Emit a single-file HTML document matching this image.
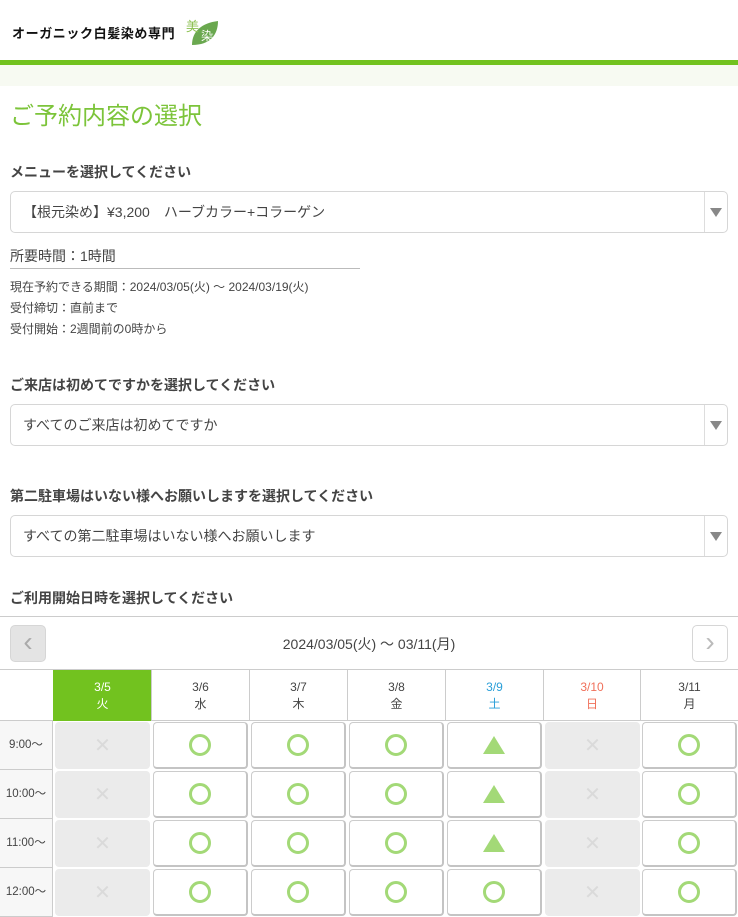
<!DOCTYPE html>
<html lang="ja"><head><meta charset="utf-8">
<style>
*{margin:0;padding:0;box-sizing:border-box}
body{width:738px;height:900px;overflow:hidden;background:#fff;font-family:"Liberation Sans","Noto Sans CJK JP",sans-serif;color:#444;position:relative}
.a{position:absolute}
.lbl{position:absolute;left:10px;font-size:14px;font-weight:bold;color:#444}
.sel{position:absolute;left:10px;width:718px;height:42px;border:1px solid #d6d6d6;border-radius:5px;font-size:14px;line-height:40px;padding-left:12px;color:#444}
.sel:after{content:"";position:absolute;right:0;top:0;width:22px;height:40px;border-left:1px solid #ddd}
.sel:before{content:"";position:absolute;right:5px;top:16px;border-left:6px solid transparent;border-right:6px solid transparent;border-top:9px solid #888}
.hd{position:absolute;top:670px;height:51px;border-left:1px solid #ccc;text-align:center;font-size:12px;line-height:17px;padding-top:9px;color:#444}
.c{position:absolute;width:95px;height:47px;border-radius:4px}
.on{background:#fff;border:1px solid #ccc;border-bottom:2px solid #c4c4c4;border-right:2px solid #c4c4c4}
.off{background:#ebebeb}
.tm{position:absolute;left:0;width:53px;height:49px;background:#f7f7f7;border-bottom:1px solid #ccc;border-right:1px solid #ccc;font-size:11.5px;line-height:48px;text-align:center;color:#444}
.o{position:absolute;left:50%;top:50%;width:22px;height:22px;margin:-11px 0 0 -11px;border:3px solid #a3d977;border-radius:50%}
.x{position:absolute;width:100%;top:12px;text-align:center;font-size:20px;color:#dadada;line-height:24px}
.t{position:absolute;left:50%;top:50%;margin:-9px 0 0 -11px;border-left:11px solid transparent;border-right:11px solid transparent;border-bottom:18px solid #a3d977}
</style></head><body>
<div class="a" style="left:12px;top:23px;font-size:13px;font-weight:bold;color:#111;letter-spacing:0.6px">オーガニック白髪染め専門</div>
<svg class="a" style="left:186px;top:17px" width="34" height="30" viewBox="0 0 34 30"><path d="M6 28 C6 14 16 6 32 4 C32 18 24 28 6 28Z" fill="#6aa84f"/><text x="0" y="14" font-size="13" fill="#8cc152" font-family="Noto Sans CJK JP">美</text><text x="15" y="23" font-size="12" fill="#fff" font-family="Noto Sans CJK JP">染</text></svg>
<div class="a" style="left:0;top:60px;width:738px;height:5px;background:#72c21f"></div>
<div class="a" style="left:0;top:65px;width:738px;height:21px;background:#f7faf2"></div>
<div class="a" style="left:10px;top:96px;font-size:24px;color:#7cc43a">ご予約内容の選択</div>
<div class="lbl" style="top:162px">メニューを選択してください</div>
<div class="sel" style="top:191px">【根元染め】¥3,200　ハーブカラー+コラーゲン</div>
<div class="a" style="left:10px;top:246px;font-size:14px">所要時間：1時間</div>
<div class="a" style="left:10px;top:268px;width:350px;height:1px;background:#bbb"></div>
<div class="a" style="left:10px;top:277px;font-size:12px;line-height:21px">現在予約できる期間：2024/03/05(火) ～ 2024/03/19(火)<br>受付締切：直前まで<br>受付開始：2週間前の0時から</div>
<div class="lbl" style="top:375px">ご来店は初めてですかを選択してください</div>
<div class="sel" style="top:404px">すべてのご来店は初めてですか</div>
<div class="lbl" style="top:486px">第二駐車場はいない様へお願いしますを選択してください</div>
<div class="sel" style="top:515px">すべての第二駐車場はいない様へお願いします</div>
<div class="lbl" style="top:588px">ご利用開始日時を選択してください</div>
<div class="a" style="left:0;top:616px;width:738px;height:1px;background:#ccc"></div>
<div class="a" style="left:10px;top:625px;width:36px;height:37px;background:#e4e4e4;border:1px solid #d6d6d6;border-radius:5px;color:#aaa;font-size:28px;line-height:32px;text-align:center">‹</div>
<div class="a" style="left:692px;top:625px;width:36px;height:37px;background:#fff;border:1px solid #d6d6d6;border-radius:5px;color:#bbb;font-size:28px;line-height:32px;text-align:center">›</div>
<div class="a" style="left:0;width:738px;top:634px;text-align:center;font-size:14px;color:#444">2024/03/05(火) ～ 03/11(月)</div>
<div class="a" style="left:0;top:669px;width:738px;height:1px;background:#ccc"></div>
<div class="a" style="left:0;top:720px;width:738px;height:1px;background:#ccc"></div>
<div class="hd" style="left:53px;width:98px;background:#72c21f;color:#fff;border-left:1px solid #72c21f">3/5<br>火</div>
<div class="hd" style="left:151px;width:98px">3/6<br>水</div>
<div class="hd" style="left:249px;width:98px">3/7<br>木</div>
<div class="hd" style="left:347px;width:98px">3/8<br>金</div>
<div class="hd" style="left:445px;width:98px;color:#2a9fd8">3/9<br>土</div>
<div class="hd" style="left:543px;width:97px;color:#f0705a">3/10<br>日</div>
<div class="hd" style="left:640px;width:98px">3/11<br>月</div>
<div id="g"></div>
<script>
var L=[55,153,251,349,447,545,642],R=[["x","o","o","o","t","x","o"],["x","o","o","o","t","x","o"],["x","o","o","o","t","x","o"],["x","o","o","o","o","x","o"]],T=["9:00～","10:00～","11:00～","12:00～"],h="";
for(var r=0;r<4;r++){var y=721+r*49;h+='<div class="tm" style="top:'+y+'px">'+T[r]+'</div>';
for(var c=0;c<7;c++){var k=R[r][c];h+='<div class="c '+(k=="x"?"off":"on")+'" style="left:'+L[c]+'px;top:'+(y+1)+'px">'+(k=="x"?'<div class="x">✕</div>':k=="o"?'<div class="o"></div>':'<div class="t"></div>')+'</div>';}}
document.getElementById("g").innerHTML=h;
</script>
</body></html>
